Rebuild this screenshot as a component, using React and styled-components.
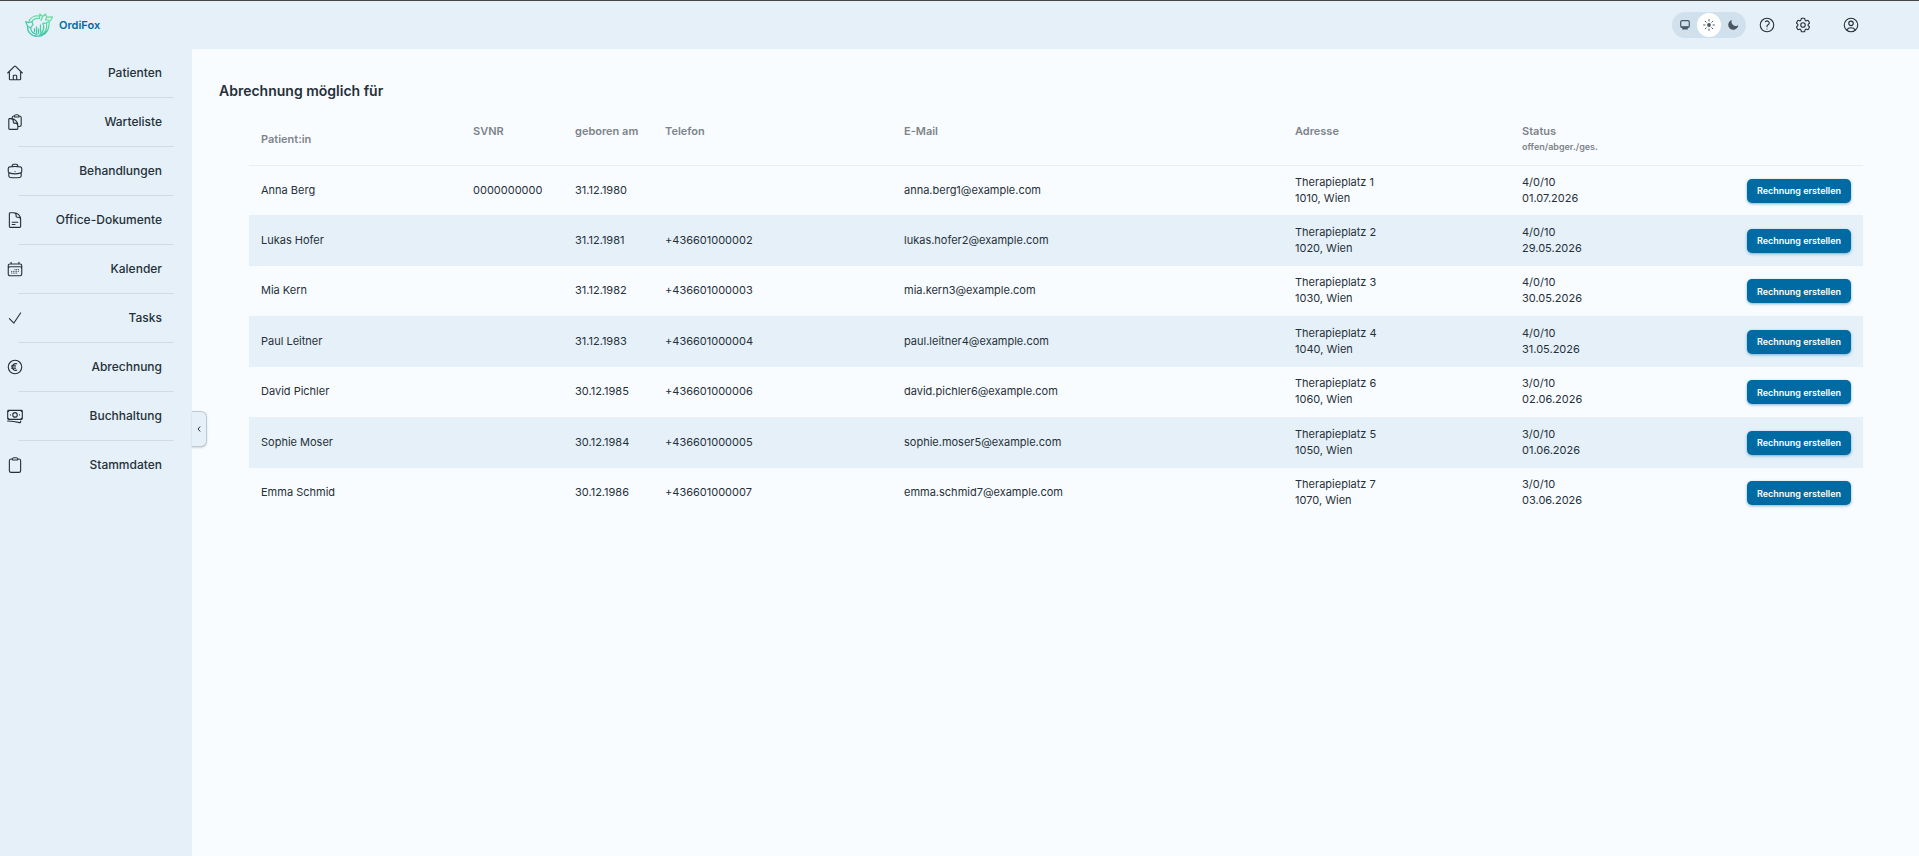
import { useState } from "react";
import styled, { createGlobalStyle } from "styled-components";
import {
  HiOutlineHome,
  HiOutlineClipboardDocument,
  HiOutlineBriefcase,
  HiOutlineDocumentText,
  HiOutlineCalendarDays,
  HiOutlineCheck,
  HiOutlineCurrencyEuro,
  HiOutlineBanknotes,
  HiOutlineClipboard,
  HiOutlineQuestionMarkCircle,
  HiOutlineCog6Tooth,
  HiOutlineUserCircle,
  HiMiniMoon,
} from "react-icons/hi2";

const navItems = [
  { label: "Patienten", Icon: HiOutlineHome },
  { label: "Warteliste", Icon: HiOutlineClipboardDocument },
  { label: "Behandlungen", Icon: HiOutlineBriefcase },
  { label: "Office-Dokumente", Icon: HiOutlineDocumentText },
  { label: "Kalender", Icon: HiOutlineCalendarDays },
  { label: "Tasks", Icon: HiOutlineCheck },
  { label: "Abrechnung", Icon: HiOutlineCurrencyEuro },
  { label: "Buchhaltung", Icon: HiOutlineBanknotes },
  { label: "Stammdaten", Icon: HiOutlineClipboard },
];

const patients = [
  { name: "Anna Berg", svnr: "0000000000", born: "31.12.1980", phone: "", email: "anna.berg1@example.com", street: "Therapieplatz 1", city: "1010, Wien", status: "4/0/10", date: "01.07.2026" },
  { name: "Lukas Hofer", svnr: "", born: "31.12.1981", phone: "+436601000002", email: "lukas.hofer2@example.com", street: "Therapieplatz 2", city: "1020, Wien", status: "4/0/10", date: "29.05.2026" },
  { name: "Mia Kern", svnr: "", born: "31.12.1982", phone: "+436601000003", email: "mia.kern3@example.com", street: "Therapieplatz 3", city: "1030, Wien", status: "4/0/10", date: "30.05.2026" },
  { name: "Paul Leitner", svnr: "", born: "31.12.1983", phone: "+436601000004", email: "paul.leitner4@example.com", street: "Therapieplatz 4", city: "1040, Wien", status: "4/0/10", date: "31.05.2026" },
  { name: "David Pichler", svnr: "", born: "30.12.1985", phone: "+436601000006", email: "david.pichler6@example.com", street: "Therapieplatz 6", city: "1060, Wien", status: "3/0/10", date: "02.06.2026" },
  { name: "Sophie Moser", svnr: "", born: "30.12.1984", phone: "+436601000005", email: "sophie.moser5@example.com", street: "Therapieplatz 5", city: "1050, Wien", status: "3/0/10", date: "01.06.2026" },
  { name: "Emma Schmid", svnr: "", born: "30.12.1986", phone: "+436601000007", email: "emma.schmid7@example.com", street: "Therapieplatz 7", city: "1070, Wien", status: "3/0/10", date: "03.06.2026" },
];

function FoxLogo() {
  return (
    <svg width="28" height="24" viewBox="0 0 28 24" fill="none" aria-hidden="true">
      <defs>
        <linearGradient id="fox" x1="20" y1="0" x2="8" y2="24" gradientUnits="userSpaceOnUse">
          <stop stopColor="#6fe29a" />
          <stop offset="1" stopColor="#35bfae" />
        </linearGradient>
      </defs>
      <g stroke="url(#fox)" strokeWidth="1.200" strokeLinecap="round" strokeLinejoin="round">
        {/* head with ears and snout */}
        <path d="M14.500 5.500 14.800.8l2.700 2.700L20.500 1l1.200 3.200 5.900-.4-1.800 3.400-4 2.600-3.800.6" />
        <path d="M17.500 3.500 16 7.500M21.700 4.200l-1.200 2.600 3.500.2" />
        {/* back and chest */}
        <path d="M14 3C9.200 2.400 5.200 4.800 3.800 8.600M14.500 5.500C11 5 8 6.400 6.800 9" />
        <path d="M24.200 8.600c.2 6.800-2.400 12.400-7.600 14.200M21.500 10c.8 5-1.200 9.800-5.200 12.200M18 10.400c1.600 4 .2 8.600-3.500 11.800" />
        {/* tail */}
        <path d="M.6 8.600 4 9.800l3-1.200 1 3-2.400 3.200-3-1.600L.6 8.600Z" />
        <path d="M2.600 13.200c-.6 5.600 3.600 10 9.600 10 1.600 0 3-.2 4.400-.6" />
        <path d="M5.600 14.800c.2 3.400 2.600 6 6.400 6.600" />
        {/* chart bars */}
        <path d="M9.500 16v2.500M11.500 14v6M13.500 16v4.500M15.500 12v7" strokeWidth="1.300" />
      </g>
    </svg>
  );
}

function MonitorIcon() {
  return (
    <svg width="10" height="10" viewBox="0 0 10 10" aria-hidden="true">
      <rect x="0.700" y="0.700" width="8.600" height="6.600" rx="1.400" fill="none" stroke="currentColor" strokeWidth="1.200" />
      <path d="M1 6.200h8L7.600 8.300l.4 1.200H2l.4-1.200Z" fill="currentColor" />
    </svg>
  );
}

function SunIcon() {
  return (
    <svg width="12" height="12" viewBox="0 0 12 12" aria-hidden="true">
      <circle cx="6" cy="6" r="1.900" fill="currentColor" />
      <path
        d="M6 .6v1.400M6 10v1.400M.6 6H2M10 6h1.400M2.200 2.200l1 1M8.800 8.800l1 1M2.200 9.800l1-1M8.800 3.200l1-1"
        stroke="currentColor"
        strokeLinecap="round"
      />
    </svg>
  );
}

export default function App() {
  const [theme, setTheme] = useState("light");
  const themes = [
    { id: "system", label: "System", icon: <MonitorIcon /> },
    { id: "light", label: "Hell", icon: <SunIcon /> },
    { id: "dark", label: "Dunkel", icon: <HiMiniMoon size={12} /> },
  ];

  return (
    <Page>
      <GlobalStyle />
      <Header>
        <Brand href="#">
          <FoxLogo />
          OrdiFox
        </Brand>
        <HeaderActions>
          <ThemeSwitch>
            {themes.map((t) => (
              <ThemeButton
                key={t.id}
                type="button"
                aria-label={t.label}
                $active={theme === t.id}
                onClick={() => setTheme(t.id)}
              >
                {t.icon}
              </ThemeButton>
            ))}
          </ThemeSwitch>
          <IconButton type="button" aria-label="Hilfe">
            <HiOutlineQuestionMarkCircle size={18} />
          </IconButton>
          <IconButton type="button" aria-label="Einstellungen">
            <HiOutlineCog6Tooth size={18} />
          </IconButton>
          <IconButton type="button" aria-label="Profil" $spaced>
            <HiOutlineUserCircle size={18} />
          </IconButton>
        </HeaderActions>
      </Header>
      <Body>
        <Sidebar>
          <NavList>
            {navItems.map(({ label, Icon }) => (
              <NavItem key={label}>
                <NavLink href="#">
                  <Icon size={18} />
                  <span>{label}</span>
                </NavLink>
              </NavItem>
            ))}
          </NavList>
          <CollapseButton type="button" aria-label="Menü einklappen">
            <svg width="4" height="8" viewBox="0 0 4 8" fill="none" stroke="currentColor">
              <path d="M3.200 1.500 1 4l2.200 2.500" />
            </svg>
          </CollapseButton>
        </Sidebar>
        <Main>
          <Title>Abrechnung möglich für</Title>
          <Table>
            <colgroup>
              <Col $width={212} />
              <Col $width={102} />
              <Col $width={90} />
              <Col $width={239} />
              <Col $width={391} />
              <Col $width={227} />
              <Col $width={180} />
              <Col $width={173} />
            </colgroup>
            <thead>
              <tr>
                <HeadCell $middle>Patient:in</HeadCell>
                <HeadCell>SVNR</HeadCell>
                <HeadCell>geboren am</HeadCell>
                <HeadCell>Telefon</HeadCell>
                <HeadCell>E-Mail</HeadCell>
                <HeadCell>Adresse</HeadCell>
                <HeadCell>
                  Status
                  <HeadNote>offen/abger./ges.</HeadNote>
                </HeadCell>
                <HeadCell />
              </tr>
            </thead>
            <tbody>
              {patients.map((p) => (
                <Row key={p.name}>
                  <Cell>{p.name}</Cell>
                  <Cell>{p.svnr}</Cell>
                  <Cell>{p.born}</Cell>
                  <Cell>{p.phone}</Cell>
                  <Cell>{p.email}</Cell>
                  <Cell>
                    {p.street}
                    <br />
                    {p.city}
                  </Cell>
                  <Cell>
                    {p.status}
                    <br />
                    {p.date}
                  </Cell>
                  <ActionCell>
                    <InvoiceButton type="button">Rechnung erstellen</InvoiceButton>
                  </ActionCell>
                </Row>
              ))}
            </tbody>
          </Table>
        </Main>
      </Body>
    </Page>
  );
}

const GlobalStyle = createGlobalStyle`
  * {
    box-sizing: border-box;
  }
  body {
    margin: 0;
    background: #f9fcff;
    color: #263039;
    font-family: Inter, "Liberation Sans", sans-serif;
    font-size: 11px;
  }
  button {
    font-family: inherit;
    color: inherit;
    border: 0;
    padding: 0;
    cursor: pointer;
  }
`;

const Page = styled.div`
  display: flex;
  flex-direction: column;
  min-height: 100vh;
`;

const Header = styled.header`
  display: flex;
  align-items: center;
  justify-content: space-between;
  height: 49px;
  padding: 0 59px 0 25px;
  background: #e5f0f9;
  border-top: 1px solid #44464a;
`;

const Brand = styled.a`
  display: flex;
  align-items: center;
  gap: 6px;
  color: #006ba3;
  font-weight: 600;
  text-decoration: none;
`;

const HeaderActions = styled.div`
  display: flex;
  align-items: center;
  gap: 18px;
`;

const ThemeSwitch = styled.div`
  display: flex;
  padding: 1px;
  margin-right: -6px;
  border-radius: 13px;
  background: #d0e0ed;
`;

const ThemeButton = styled.button`
  display: flex;
  align-items: center;
  justify-content: center;
  width: 24px;
  height: 24px;
  border-radius: 50%;
  color: #4b5660;
  background: ${({ $active }) => ($active ? "#fff" : "transparent")};
`;

const IconButton = styled.button`
  display: flex;
  background: none;
  margin-left: ${({ $spaced }) => ($spaced ? "12px" : "0")};
`;

const Body = styled.div`
  display: flex;
  flex: 1;
`;

const Sidebar = styled.aside`
  position: relative;
  flex: 0 0 192px;
  background: #e5f0f9;
`;

const NavList = styled.ul`
  list-style: none;
  margin: 0;
  padding: 0;
`;

const NavItem = styled.li`
  &:not(:last-child)::after {
    content: "";
    display: block;
    height: 1px;
    margin: 0 18px;
    background: #d0dbe5;
  }
`;

const NavLink = styled.a`
  display: flex;
  align-items: center;
  justify-content: space-between;
  height: 48px;
  padding: 0 30px 1px 6px;
  color: inherit;
  font-size: 12px;
  font-weight: 500;
  text-decoration: none;
`;

/* handle that sticks out over the content */
const CollapseButton = styled.button`
  position: absolute;
  top: 362px;
  left: 100%;
  display: flex;
  align-items: center;
  justify-content: center;
  width: 15px;
  height: 36px;
  border: 1px solid #bcc8d2;
  border-left: 0;
  border-radius: 0 6px 6px 0;
  background: #e5f0f9;
  box-shadow: 0 1px 2px rgba(0, 0, 0, 0.15);
`;

const Main = styled.main`
  flex: 1;
  min-width: 0;
  padding: 32px 56px 32px 27px;
`;

const Title = styled.h1`
  margin: 0 0 14px;
  font-size: 14px;
  line-height: 20px;
  font-weight: 600;
`;

const Table = styled.table`
  width: calc(100% - 30px);
  margin-left: 30px;
  table-layout: fixed;
  border-collapse: separate;
  border-spacing: 0;
`;

const Col = styled.col`
  width: ${({ $width }) => $width}px;
`;

const HeadCell = styled.th`
  height: 51px;
  padding: 8px 12px 10px;
  border-bottom: 1px solid #e9eef3;
  color: #7d848a;
  font-weight: 600;
  line-height: 16px;
  text-align: left;
  vertical-align: ${({ $middle }) => ($middle ? "middle" : "top")};
`;

const HeadNote = styled.div`
  font-size: 9px;
`;

const Row = styled.tr`
  height: 50px;
  &:first-child {
    height: 49px;
  }
  &:nth-child(even) {
    height: 51px;
    background: #e5f0f9;
  }
`;

const Cell = styled.td`
  padding: 0 12px 2px;
  line-height: 16px;
  vertical-align: middle;
`;

const ActionCell = styled.td`
  padding: 0 12px;
  text-align: right;
  vertical-align: middle;
`;

const InvoiceButton = styled.button`
  height: 24px;
  padding: 0 10px;
  border-radius: 5px;
  background: #006ba3;
  color: #fff;
  font-size: 9px;
  font-weight: 600;
  box-shadow: 0 1px 3px rgba(0, 107, 163, 0.5);
`;
